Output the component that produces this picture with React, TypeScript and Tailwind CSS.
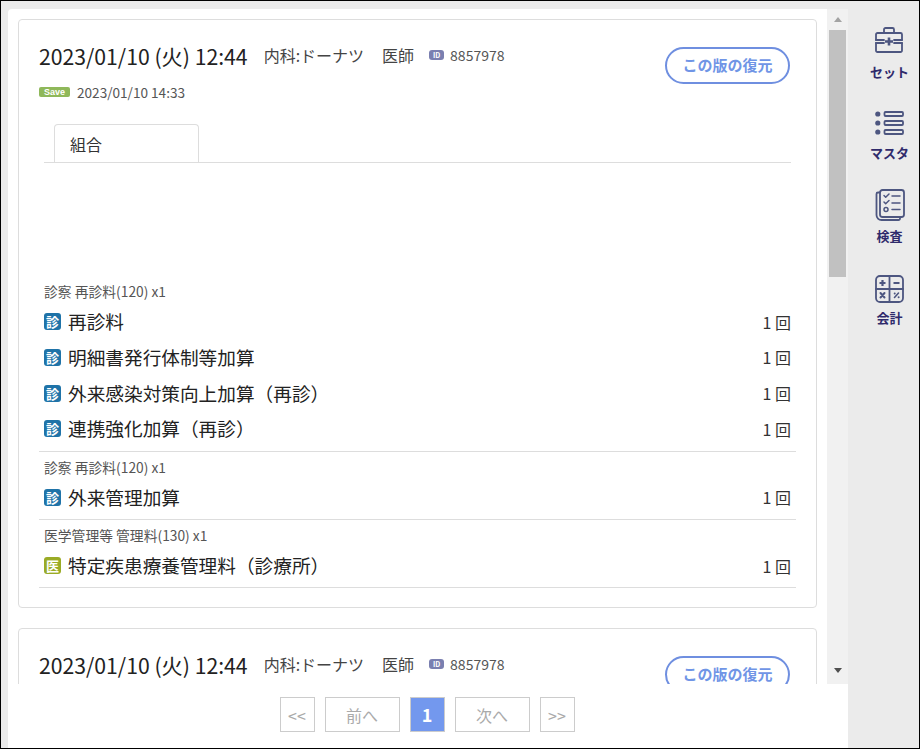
import React from "react";

const font = { fontFamily: '"Noto Sans CJK JP", "Noto Sans", sans-serif' };

function Badge({ kind }: { kind: "shin" | "i" }) {
  return (
    <span className={`flex h-[17px] w-[17px] shrink-0 items-center justify-center rounded-[3px] text-[13px] leading-none font-bold text-white ${kind === "shin" ? "bg-[#1f73a8]" : "bg-[#9aab26]"}`}>
      {kind === "shin" ? "診" : "医"}
    </span>
  );
}

function Row({ name, kind = "shin" }: { name: string; kind?: "shin" | "i" }) {
  return (
    <div className="flex h-[35.67px] items-center pr-[5px] pl-[5px]">
      <Badge kind={kind} />
      <span className="ml-[7px] flex-1 text-[18.67px] leading-none text-[#222]">{name}</span>
      <span className="text-[16px] leading-none text-[#333]">1 回</span>
    </div>
  );
}

function Group({ title, children, space }: { title: string; children: React.ReactNode; space: string }) {
  return (
    <div className={`border-b border-[#ddd] pt-[7px] ${space}`}>
      <div className="pl-[5px] text-[13.8px] leading-[16px] text-[#555]">{title}</div>
      {children}
    </div>
  );
}

function CardHeader() {
  return (
    <div className="flex items-start justify-between pr-[26px]">
      <div>
        <div className="flex items-center">
          <span className="translate-y-[1px] text-[21.2px] leading-[32px] text-[#222]">2023/01/10 (火) 12:44</span>
          <span className="ml-[16px] text-[16px] text-[#444]">内科:ドーナツ</span>
          <span className="ml-[18px] text-[16px] text-[#444]">医師</span>
          <span className="ml-[15px] flex h-[10px] w-[15px] items-center justify-center rounded-[3px] bg-[#7a7fb0] text-[7px] leading-none font-bold text-white">ID</span>
          <span className="ml-[6px] text-[14px] text-[#555]">8857978</span>
        </div>
        <div className="mt-[11px] flex items-center">
          <span className="flex h-[10px] w-[31px] items-center justify-center rounded-[2px] bg-[#8fb85a] text-[9px] leading-none font-bold text-white" style={{ fontFamily: '"Liberation Sans", sans-serif' }}>Save</span>
          <span className="ml-[7px] text-[13.6px] leading-[20px] text-[#555]">2023/01/10 14:33</span>
        </div>
      </div>
      <button className="mt-[8px] flex h-[37px] w-[125px] items-center justify-center rounded-full border-2 border-[#6f8fe0] text-[15px] font-bold text-[#7095e6]">この版の復元</button>
    </div>
  );
}

function SideItem({ label, icon, h, mt }: { label: string; icon: React.ReactNode; h: string; mt: string }) {
  return (
    <div className={`flex flex-col items-center ${h}`}>
      {icon}
      <span className={`${mt} text-[13px] leading-[18px] font-bold text-[#2f2a6b]`}>{label}</span>
    </div>
  );
}

const stroke = { fill: "none", stroke: "#4d5680", strokeWidth: 1.8, strokeLinecap: "round" as const, strokeLinejoin: "round" as const };

const Kit = (
  <svg width="28" height="26" viewBox="0 0 28 26" {...stroke}>
    <path d="M9 6V2.5A1.5 1.5 0 0 1 10.5 1h7A1.5 1.5 0 0 1 19 2.5V6" />
    <path d="M1 13V7.5A1.5 1.5 0 0 1 2.5 6h23A1.5 1.5 0 0 1 27 7.5V13" />
    <path d="M1 13h8M19 13h8" />
    <path d="M1 16v8A1.5 1.5 0 0 0 2.5 25h23a1.5 1.5 0 0 0 1.5-1.5V16" />
    <path d="M1 16h8M19 16h8" />
    <path d="M14 10.5v8M10 14.5h8" strokeWidth="2.6" strokeLinecap="butt" />
  </svg>
);
const ListI = (
  <svg width="29" height="24" viewBox="0 0 29 24" {...stroke}>
    <circle cx="2.8" cy="3" r="2.6" fill="#4d5680" stroke="none" />
    <circle cx="2.8" cy="12" r="2.6" fill="#4d5680" stroke="none" />
    <circle cx="2.8" cy="21" r="2.6" fill="#4d5680" stroke="none" />
    <rect x="9.5" y="1" width="18.5" height="4" rx="1" />
    <rect x="9.5" y="10" width="18.5" height="4" rx="1" />
    <rect x="9.5" y="19" width="18.5" height="4" rx="1" />
  </svg>
);
const Check = (
  <svg width="30" height="32" viewBox="0 0 30 32" {...stroke}>
    <path d="M5 3.5H3A1.5 1.5 0 0 0 1.5 5v21a5 5 0 0 0 5 5h17a1.5 1.5 0 0 0 1.5-1.5V28" />
    <rect x="5" y="1" width="24" height="27" rx="2.5" />
    <path d="M9 6.5l1.7 1.7L14 5M9 13l1.7 1.7L14 11.5M17 7h8M17 14h8M17 20.5h8" strokeWidth="1.5" />
    <circle cx="11" cy="20.5" r="2" strokeWidth="1.5" />
  </svg>
);
const Calc = (
  <svg width="29" height="28" viewBox="0 0 29 28" {...stroke}>
    <rect x="1" y="1" width="27" height="26" rx="4" />
    <path d="M14.5 1v26M1 14h27" />
    <path d="M4.5 8h6M7.5 5v6M18.5 8h6" strokeWidth="2.2" strokeLinecap="butt" />
    <path d="M5.5 18l4 4.5M9.5 18l-4 4.5" strokeWidth="2" />
    <path d="M19.5 22.5l4-4.5" strokeWidth="1.6" />
    <circle cx="19.7" cy="18.6" r="1" fill="#4d5680" stroke="none" />
    <circle cx="23.6" cy="22.2" r="1" fill="#4d5680" stroke="none" />
  </svg>
);

export default function App() {
  return (
    <div className="flex h-[749px] w-[920px] flex-col overflow-hidden border border-black bg-[#ebebeb]" style={font}>
      <div className="flex min-h-0 flex-1">
        <div className="flex w-[847px] shrink-0 flex-col pt-[8px] pl-[7px]">
          <div className="flex min-h-0 flex-1 overflow-hidden rounded-tl-[4px] bg-white">
            <div className="h-[675px] flex-1 overflow-hidden pt-[10px] pl-[10px]">
              <div className="h-[589px] w-[799px] rounded-[4px] border border-[#ddd] pt-[19px] pl-[20px]">
                <CardHeader />
                <div className="mt-[22px] mr-[25px] ml-[5px] h-[39px] border-b border-[#ddd] pl-[10px]">
                  <div className="flex h-[39px] w-[145px] items-center rounded-t-[4px] border border-b-0 border-[#ddd] pl-[15px] text-[16px] text-[#333]">組合</div>
                </div>
                <div className="mr-[20px] pt-[113px]">
                  <Group title="診察 再診料(120) x1" space="pb-[4.33px] [&>div:nth-child(2)]:mt-[5px]">
                    <Row name="再診料" />
                    <Row name="明細書発行体制等加算" />
                    <Row name="外来感染対策向上加算（再診）" />
                    <Row name="連携強化加算（再診）" />
                  </Group>
                  <Group title="診察 再診料(120) x1" space="pb-[3.83px] [&>div:nth-child(2)]:mt-[4.5px]">
                    <Row name="外来管理加算" />
                  </Group>
                  <Group title="医学管理等 管理料(130) x1" space="pb-[3.33px] [&>div:nth-child(2)]:mt-[5px]">
                    <Row name="特定疾患療養管理料（診療所）" kind="i" />
                  </Group>
                </div>
              </div>
              <div className="mt-[20px] h-[589px] w-[799px] rounded-[4px] border border-[#ddd] pt-[19px] pl-[20px]">
                <CardHeader />
              </div>
            </div>
            <div className="flex h-[675px] w-[21px] shrink-0 flex-col items-center bg-[#f1f1f1]">
              <div className="flex h-[21px] items-center justify-center">
                <div className="h-0 w-0 border-x-[4.5px] border-b-[5px] border-x-transparent border-b-[#a3a3a3]" />
              </div>
              <div className="h-[247px] w-[17px] bg-[#c1c1c1]" />
              <div className="flex-1" />
              <div className="flex h-[21px] items-center justify-center pb-[6px]">
                <div className="h-0 w-0 border-x-[4.5px] border-t-[5px] border-x-transparent border-t-[#505050]" />
              </div>
            </div>
          </div>
          <div className="flex h-[64px] shrink-0 items-center justify-center gap-[10px] bg-white pr-[2px] pb-[3px] text-[#aaa]">
            <span className="flex h-[35px] w-[35px] items-center justify-center border border-[#ccc] text-[16px]">&lt;&lt;</span>
            <span className="flex h-[35px] w-[75px] items-center justify-center border border-[#ccc] text-[16px]">前へ</span>
            <span className="flex h-[35px] w-[35px] items-center justify-center border border-[#ccc] bg-[#7398ee] text-[18px] font-bold text-white">1</span>
            <span className="flex h-[35px] w-[75px] items-center justify-center border border-[#ccc] text-[16px]">次へ</span>
            <span className="flex h-[35px] w-[35px] items-center justify-center border border-[#ccc] text-[16px]">&gt;&gt;</span>
          </div>
        </div>
        <div className="flex flex-1 flex-col items-center pt-[26px] pl-[12px]">
          <SideItem label="セット" icon={Kit} h="h-[84px]" mt="mt-[10px]" />
          <SideItem label="マスタ" icon={ListI} h="h-[78px]" mt="mt-[9px]" />
          <SideItem label="検査" icon={Check} h="h-[86px]" mt="mt-[6px]" />
          <SideItem label="会計" icon={Calc} h="h-[60px]" mt="mt-[6px]" />
        </div>
      </div>
    </div>
  );
}
